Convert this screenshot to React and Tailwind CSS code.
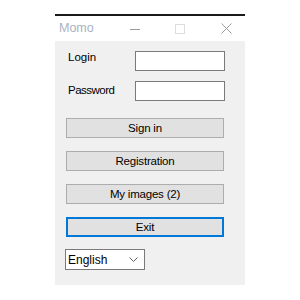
import React from "react";

const WinButton = ({ children, focused }) => (
  <button
    className={
      "h-[20px] w-[158px] ml-[11px] pt-[2px] flex items-center justify-center bg-[#e1e1e1] text-[11.5px] tracking-[-0.2px] text-black " +
      (focused ? "border-2 border-[#0078d7]" : "border border-[#adadad]")
    }
  >
    {children}
  </button>
);

const App = () => {
  return (
    <div
      className="w-[300px] h-[300px] bg-white pt-[14px] pl-[55px]"
      style={{ fontFamily: '"Liberation Sans", Arial, sans-serif' }}
    >
      <div className="w-[190px] border-t-2 border-[#1a1a1a]">
        {/* Title bar */}
        <div className="h-[25px] flex items-center bg-white">
          <span className="w-[75px] pl-[4px] text-[12.5px] text-[#a9b3c4]">
            Momo
          </span>
          <svg width="10" height="10" viewBox="0 0 10 10">
            <line x1="0" y1="5.5" x2="10" y2="5.5" stroke="#9a9a9a" strokeWidth="1" />
          </svg>
          <div className="w-[35px]" />
          <svg width="10" height="10" viewBox="0 0 10 10">
            <rect x="0.5" y="0.5" width="9" height="9" fill="none" stroke="#dcdcdc" strokeWidth="1" />
          </svg>
          <div className="w-[36px]" />
          <svg width="11" height="11" viewBox="0 0 11 11">
            <line x1="0.5" y1="0.5" x2="10.5" y2="10.5" stroke="#9a9a9a" strokeWidth="1" />
            <line x1="10.5" y1="0.5" x2="0.5" y2="10.5" stroke="#9a9a9a" strokeWidth="1" />
          </svg>
        </div>

        {/* Body */}
        <div className="h-[244px] bg-[#f0f0f0] pt-[10px] flex flex-col">
          <div className="flex h-[20px]">
            <span className="w-[80px] pl-[13px] text-[11.5px] leading-[13px] text-black">
              Login
            </span>
            <div className="w-[90px] h-[20px] bg-white border border-[#7a7a7a]" />
          </div>
          <div className="flex h-[20px] mt-[10px]">
            <span className="w-[80px] pl-[13px] mt-[3px] text-[11.5px] leading-[13px] text-black tracking-[-0.5px]">
              Password
            </span>
            <div className="w-[90px] h-[20px] bg-white border border-[#7a7a7a]" />
          </div>

          <div className="mt-[17px] flex flex-col gap-[13px]">
            <WinButton>Sign in</WinButton>
            <WinButton>Registration</WinButton>
            <WinButton>My images (2)</WinButton>
            <WinButton focused>Exit</WinButton>
          </div>

          <div className="mt-[12px] ml-[10px] w-[80px] h-[21px] bg-white border border-[#7a7a7a] flex items-center justify-between pl-[2px] pr-[6px]">
            <span className="text-[12px] text-black">English</span>
            <svg width="9" height="5" viewBox="0 0 9 5">
              <polyline points="0.5,0.5 4.5,4.5 8.5,0.5" fill="none" stroke="#606060" strokeWidth="1" />
            </svg>
          </div>
        </div>
      </div>
    </div>
  );
};

export default App;
